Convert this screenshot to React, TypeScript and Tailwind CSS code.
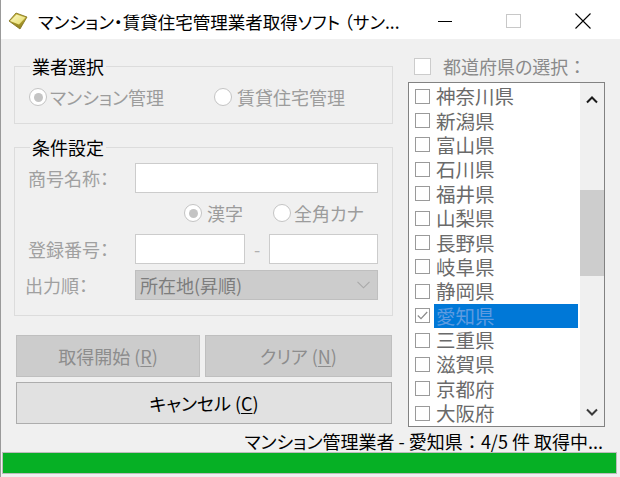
import React from "react";

const prefs = [
  "神奈川県",
  "新潟県",
  "富山県",
  "石川県",
  "福井県",
  "山梨県",
  "長野県",
  "岐阜県",
  "静岡県",
  "愛知県",
  "三重県",
  "滋賀県",
  "京都府",
  "大阪府",
];

function Radio({ checked }: { checked?: boolean }) {
  return (
    <span className="w-[18px] h-[18px] rounded-full border border-[#c4c4c4] bg-white flex items-center justify-center shrink-0">
      {checked && <span className="w-[9px] h-[9px] rounded-full bg-[#c4c4c4]" />}
    </span>
  );
}

function GemIcon() {
  return (
    <svg width="20" height="20" viewBox="0 0 20 20" className="shrink-0">
      <defs>
        <linearGradient id="gtop" x1="0" y1="0" x2="1" y2="1">
          <stop offset="0" stopColor="#fbf7c4" />
          <stop offset="1" stopColor="#e6dc6a" />
        </linearGradient>
        <linearGradient id="gside" x1="0" y1="0" x2="0" y2="1">
          <stop offset="0" stopColor="#c9b83c" />
          <stop offset="1" stopColor="#8f7f1e" />
        </linearGradient>
      </defs>
      <polygon points="1,10 8,2 19,6 12,18" fill="url(#gside)" stroke="#7d6e1a" strokeWidth="0.8" />
      <polygon points="2,10 8.5,3.5 17.5,6.5 11,13.5" fill="url(#gtop)" />
    </svg>
  );
}

export default function App() {
  return (
    <div className="w-[620px] h-[477px] bg-[#f0f0f0] flex flex-col border-l border-[#9a9a9a] overflow-hidden font-['Noto_Sans_CJK_JP','Noto_Sans',sans-serif] [font-feature-settings:'palt']">
      {/* Title bar */}
      <div className="h-[39px] bg-white flex items-center shrink-0">
        <div className="ml-[7px] mt-[3px]">
          <GemIcon />
        </div>
        <span className="ml-[10px] mt-[4px] text-[17.5px] leading-[20px] text-black whitespace-nowrap">
          マンション・賃貸住宅管理業者取得ソフト （サン...
        </span>
        <div className="ml-auto flex h-full mr-[3px]">
          <div className="w-[69px] flex items-center justify-center">
            <span className="w-[14px] h-px bg-black mt-[3px]" />
          </div>
          <div className="w-[69px] flex items-center justify-center">
            <span className="w-[15px] h-[14px] border border-[#c8c8c8] mt-[3px]" />
          </div>
          <div className="w-[69px] flex items-center justify-center">
            <svg width="16" height="16" viewBox="0 0 16 16" className="mt-[3px]">
              <path d="M0.5 0.5 L15.5 15.5 M15.5 0.5 L0.5 15.5" stroke="#000" strokeWidth="1.1" fill="none" />
            </svg>
          </div>
        </div>
      </div>

      {/* Body */}
      <div className="flex pt-[17px] shrink-0 h-[388px]">
        {/* Left column */}
        <div className="ml-[13px] w-[379px] flex flex-col">
          <fieldset className="border border-[#dcdcdc] pb-[16px]">
            <legend className="ml-[15px] px-[2px] text-[18px] leading-[20px] text-black">業者選択</legend>
            <div className="mt-[11px] h-[20px] flex items-center pl-[14px] text-[18px] text-[#9c9c9c]">
              <div className="w-[185px] flex items-center gap-[3px]">
                <Radio checked />
                <span className="leading-[20px] whitespace-nowrap">マンション管理</span>
              </div>
              <div className="flex items-center gap-[5px]">
                <Radio />
                <span className="leading-[20px] whitespace-nowrap">賃貸住宅管理</span>
              </div>
            </div>
          </fieldset>

          <fieldset className="mt-[13px] border border-[#dcdcdc] pb-[15px] text-[18px] text-[#a0a0a0]">
            <legend className="ml-[15px] px-[2px] text-[18px] leading-[20px] text-black">条件設定</legend>
            <div className="mt-[6px] h-[30px] flex items-center">
              <span className="w-[120px] pl-[13px] leading-[20px] whitespace-nowrap">商号名称：</span>
              <div className="w-[243px] h-[30px] bg-white border border-[#cccccc]" />
            </div>
            <div className="mt-[10px] h-[20px] flex items-center pl-[169px] text-[#9c9c9c]">
              <div className="w-[89px] flex items-center gap-[5px]">
                <Radio checked />
                <span className="leading-[20px]">漢字</span>
              </div>
              <div className="flex items-center gap-[3px]">
                <Radio />
                <span className="leading-[20px] whitespace-nowrap">全角カナ</span>
              </div>
            </div>
            <div className="mt-[11px] h-[30px] flex items-center">
              <span className="w-[120px] pl-[13px] leading-[20px] whitespace-nowrap">登録番号：</span>
              <div className="w-[110px] h-[30px] bg-white border border-[#cccccc]" />
              <span className="w-[24px] text-center leading-[20px] text-[#b0b0b0]">-</span>
              <div className="w-[109px] h-[30px] bg-white border border-[#cccccc]" />
            </div>
            <div className="mt-[6px] h-[30px] flex items-center">
              <span className="w-[120px] pl-[10px] leading-[20px] whitespace-nowrap">出力順：</span>
              <div className="w-[243px] h-[30px] bg-[#cccccc] border border-[#bfbfbf] flex items-center pl-[4px]">
                <span className="leading-[20px] text-[#7d7d7d] whitespace-nowrap">所在地(昇順)</span>
                <svg width="13" height="8" viewBox="0 0 13 8" className="ml-auto mr-[7px]">
                  <path d="M0.5 0.8 L6.5 6.8 L12.5 0.8" stroke="#a8a8a8" strokeWidth="1.1" fill="none" />
                </svg>
              </div>
            </div>
          </fieldset>

          <div className="mt-[19px] ml-[2px] flex gap-[5px]">
            <div className="w-[184px] h-[42px] bg-[#cccccc] border border-[#bfbfbf] flex items-center justify-center text-[18px] text-[#8d8d8d] whitespace-nowrap">
              取得開始 (<span className="underline underline-offset-2">R</span>)
            </div>
            <div className="w-[187px] h-[42px] bg-[#cccccc] border border-[#bfbfbf] flex items-center justify-center text-[18px] text-[#8d8d8d] whitespace-nowrap">
              クリア (<span className="underline underline-offset-2">N</span>)
            </div>
          </div>
          <div className="mt-[5px] ml-[2px] w-[376px] h-[42px] bg-[#e1e1e1] border border-[#adadad] flex items-center justify-center text-[18px] text-black whitespace-nowrap">
            キャンセル (<span className="underline underline-offset-2">C</span>)
          </div>
        </div>

        {/* Right column */}
        <div className="ml-[15px] w-[197px] flex flex-col">
          <div className="h-[20px] flex items-center pl-[6px]">
            <span className="w-[17px] h-[17px] border border-[#cccccc] bg-white shrink-0" />
            <span className="ml-[12px] text-[18px] leading-[20px] text-[#8a8a8a] whitespace-nowrap">
              都道府県の選択<span className="[font-feature-settings:normal]">：</span>
            </span>
          </div>
          <div className="mt-[6px] h-[345px] border border-[#828282] bg-white flex overflow-hidden">
            <div className="flex-1 pt-[1px] flex flex-col overflow-hidden">
              {prefs.map((p) => {
                const sel = p === "愛知県";
                return (
                  <div key={p} className="h-[24.4px] shrink-0 flex items-center pl-[6px]">
                    <span className="w-[15px] h-[15px] border border-[#9a9a9a] bg-white shrink-0 flex items-center justify-center">
                      {sel && (
                        <svg width="11" height="9" viewBox="0 0 11 9">
                          <path d="M0.8 4.5 L4 7.6 L10.2 1" stroke="#8a8a8a" strokeWidth="1.2" fill="none" />
                        </svg>
                      )}
                    </span>
                    <span
                      className={
                        sel
                          ? "ml-[4px] mr-[2px] flex-1 h-full flex items-center pl-[2px] text-[19.5px] leading-[22px] whitespace-nowrap bg-[#0078d7] text-[#5d9be0]"
                          : "ml-[4px] mr-[2px] flex-1 h-full flex items-center pl-[2px] text-[19.5px] leading-[22px] whitespace-nowrap text-[#6a6a6a]"
                      }
                    >
                      {p}
                    </span>
                  </div>
                );
              })}
            </div>
            <div className="w-[24px] bg-[#f0f0f0] flex flex-col shrink-0">
              <div className="h-[34px] flex items-center justify-center">
                <svg width="12" height="8" viewBox="0 0 12 8">
                  <path d="M1 6.5 L6 1.5 L11 6.5" stroke="#1a1a1a" strokeWidth="2" fill="none" />
                </svg>
              </div>
              <div className="flex-1 flex flex-col">
                <div className="mt-[73px] h-[86px] bg-[#cdcdcd]" />
              </div>
              <div className="h-[28px] flex items-center justify-center">
                <svg width="12" height="8" viewBox="0 0 12 8">
                  <path d="M1 1.5 L6 6.5 L11 1.5" stroke="#3a3a3a" strokeWidth="2" fill="none" />
                </svg>
              </div>
            </div>
          </div>
        </div>
      </div>

      {/* Status */}
      <div className="mt-[4px] h-[20px] flex items-center justify-end pr-[17px] text-[18px] leading-[20px] text-black whitespace-nowrap shrink-0">
        マンション管理業者 - 愛知県<span className="[font-feature-settings:normal]">：</span>4/5 件 取得中...
      </div>

      {/* Progress */}
      <div className="mt-[1px] ml-[1px] mr-[3px] h-[22px] border border-[#bcbcbc] bg-[#e6e6e6] shrink-0">
        <div className="h-full bg-[#06b025]" style={{ width: "100%" }} />
      </div>
    </div>
  );
}
